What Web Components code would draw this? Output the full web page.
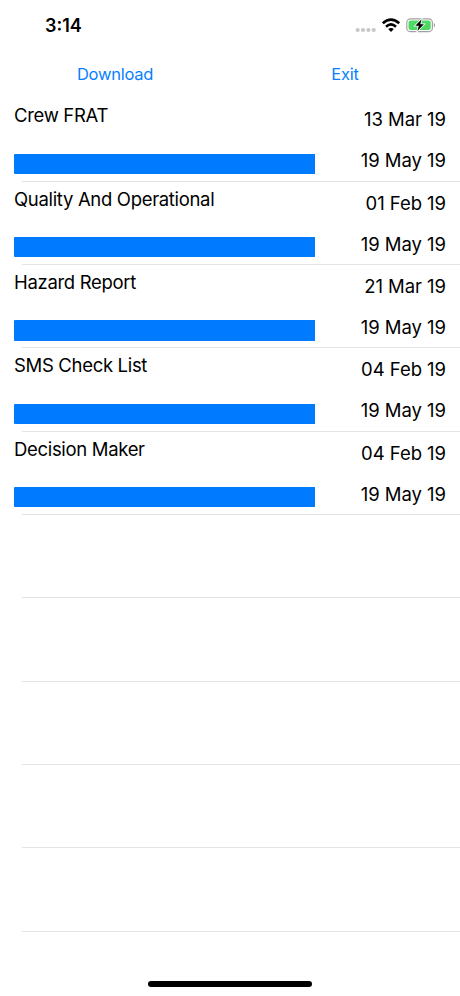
<!DOCTYPE html>
<html lang="en">
<head>
<meta charset="utf-8">
<meta name="viewport" content="width=device-width, initial-scale=1">
<title>Documents</title>
<style>
  body{
    margin: 0;
    background-color: #fff;
    color: #000;
    font-family: Inter, "Liberation Sans", sans-serif;
  }
</style>
</head>
<body>
<phone-screen>
  <status-bar slot="status">3:14</status-bar>
  <tool-bar slot="tools">
    <tool-button>Download</tool-button>
    <tool-button>Exit</tool-button>
  </tool-bar>
  <report-row created="13 Mar 19" updated="19 May 19">Crew FRAT</report-row>
  <report-row created="01 Feb 19" updated="19 May 19">Quality And Operational</report-row>
  <report-row created="21 Mar 19" updated="19 May 19">Hazard Report</report-row>
  <report-row created="04 Feb 19" updated="19 May 19">SMS Check List</report-row>
  <report-row created="04 Feb 19" updated="19 May 19">Decision Maker</report-row>
  <report-row></report-row>
  <report-row></report-row>
  <report-row></report-row>
  <report-row></report-row>
  <report-row></report-row>
</phone-screen>

<script>
(function(){

function define(name, html, setup)
{
  const template = document.createElement('template');
  template.innerHTML = html;

  customElements.define(name, class extends HTMLElement {
    constructor()
    {
      super();
      const shadowRoot = this.attachShadow({mode: 'open'});
      shadowRoot.appendChild(template.content.cloneNode(true));
      if(setup)
        setup(this, shadowRoot);
    }
  });
}

define('phone-screen', `
<style>
  :host{
    display: flex;
    flex-direction: column;
    width: 460px;
    height: 996px;
    overflow: hidden;
  }

  main{
    flex: 1;
    min-height: 0;
  }

  .home{
    width: 164px;
    height: 6px;
    margin: 0 auto 9px;
    border-radius: 3px;
    background-color: #000;
  }
</style>
<slot name=status></slot>
<slot name=tools></slot>
<main><slot></slot></main>
<div class=home></div>`);

define('status-bar', `
<style>
  :host{
    display: flex;
    justify-content: space-between;
    box-sizing: border-box;
    height: 54px;
    padding: 15px 25px 0 45px;
    font-size: 18px;
    font-weight: 600;
    line-height: 22px;
  }

  .icons{
    display: block;
    width: 80px;
    height: 20px;
  }
</style>
<span><slot></slot></span>
<svg class=icons viewBox="355 15 80 20">
  <g fill="#c8c8c8">
    <circle cx="357.7" cy="30" r="2.1"/>
    <circle cx="363" cy="30" r="2.1"/>
    <circle cx="368.4" cy="30" r="2.1"/>
    <circle cx="373.7" cy="30" r="2.1"/>
  </g>
  <g fill="none" stroke="#000" stroke-width="2.6">
    <path d="M382.8 23.3Q391 15.8 399.2 23.3"/>
    <path d="M386 26.7Q391 22.2 396 26.7"/>
  </g>
  <path d="M388.2 29.1Q391 26.7 393.8 29.1L391 32Z"/>
  <rect x="406.8" y="18.8" width="25.6" height="12.9" rx="3.8" fill="none" stroke="#a2a2a2" stroke-width="1.2"/>
  <rect x="408.5" y="20.5" width="22.2" height="9.5" rx="2.2" fill="#4cd964"/>
  <path d="M433.8 23Q435.3 23.6 435.3 25.1T433.8 27.2Z" fill="#a2a2a2"/>
  <path d="M421.6 19.2L415.3 25.8H418.8L417.4 31L423.9 24.3H420.3Z" stroke="#fff" stroke-width="1.6" paint-order="stroke"/>
</svg>`);

define('tool-bar', `
<style>
  :host{
    display: grid;
    grid-template-columns: 1fr 1fr;
    height: 44.2px;
  }
</style>
<slot></slot>`);

define('tool-button', `
<style>
  :host{
    display: block;
    text-align: center;
  }

  button{
    padding: 0;
    border: 0;
    background: none;
    color: #087fff;
    font: 16.5px/40px Inter, "Liberation Sans", sans-serif;
    letter-spacing: -0.25px;
  }
</style>
<button><slot></slot></button>`);

define('report-row', `
<style>
  :host{
    display: block;
    height: 83.35px;
    font-size: 18.5px;
    line-height: 24px;
    background: linear-gradient(#e3e3e5, #e3e3e5) 22px 100% / 100% 1px no-repeat;
  }

  .content{
    display: flex;
    justify-content: space-between;
    padding: 5px 14px 0;
  }

  .name{
    letter-spacing: -0.32px;
  }

  .progress{
    width: 301.3px;
    height: 20.5px;
    margin-top: 26.4px;
    border-radius: 1px 0 0 1px;
    background-color: #007aff;
  }

  .dates{
    display: flex;
    flex-direction: column;
    gap: 17px;
    padding-top: 4px;
    letter-spacing: -0.05px;
    text-align: right;
    white-space: nowrap;
  }

  :host(:not([created])) .content
  {
    display: none;
  }
</style>
<div class=content>
  <div>
    <div class=name><slot></slot></div>
    <div class=progress></div>
  </div>
  <div class=dates>
    <span class=created></span>
    <span class=updated></span>
  </div>
</div>`, (row, root) => {
  root.querySelector('.created').textContent = row.getAttribute('created') || '';
  root.querySelector('.updated').textContent = row.getAttribute('updated') || '';
});

})();
</script>
</body>
</html>
